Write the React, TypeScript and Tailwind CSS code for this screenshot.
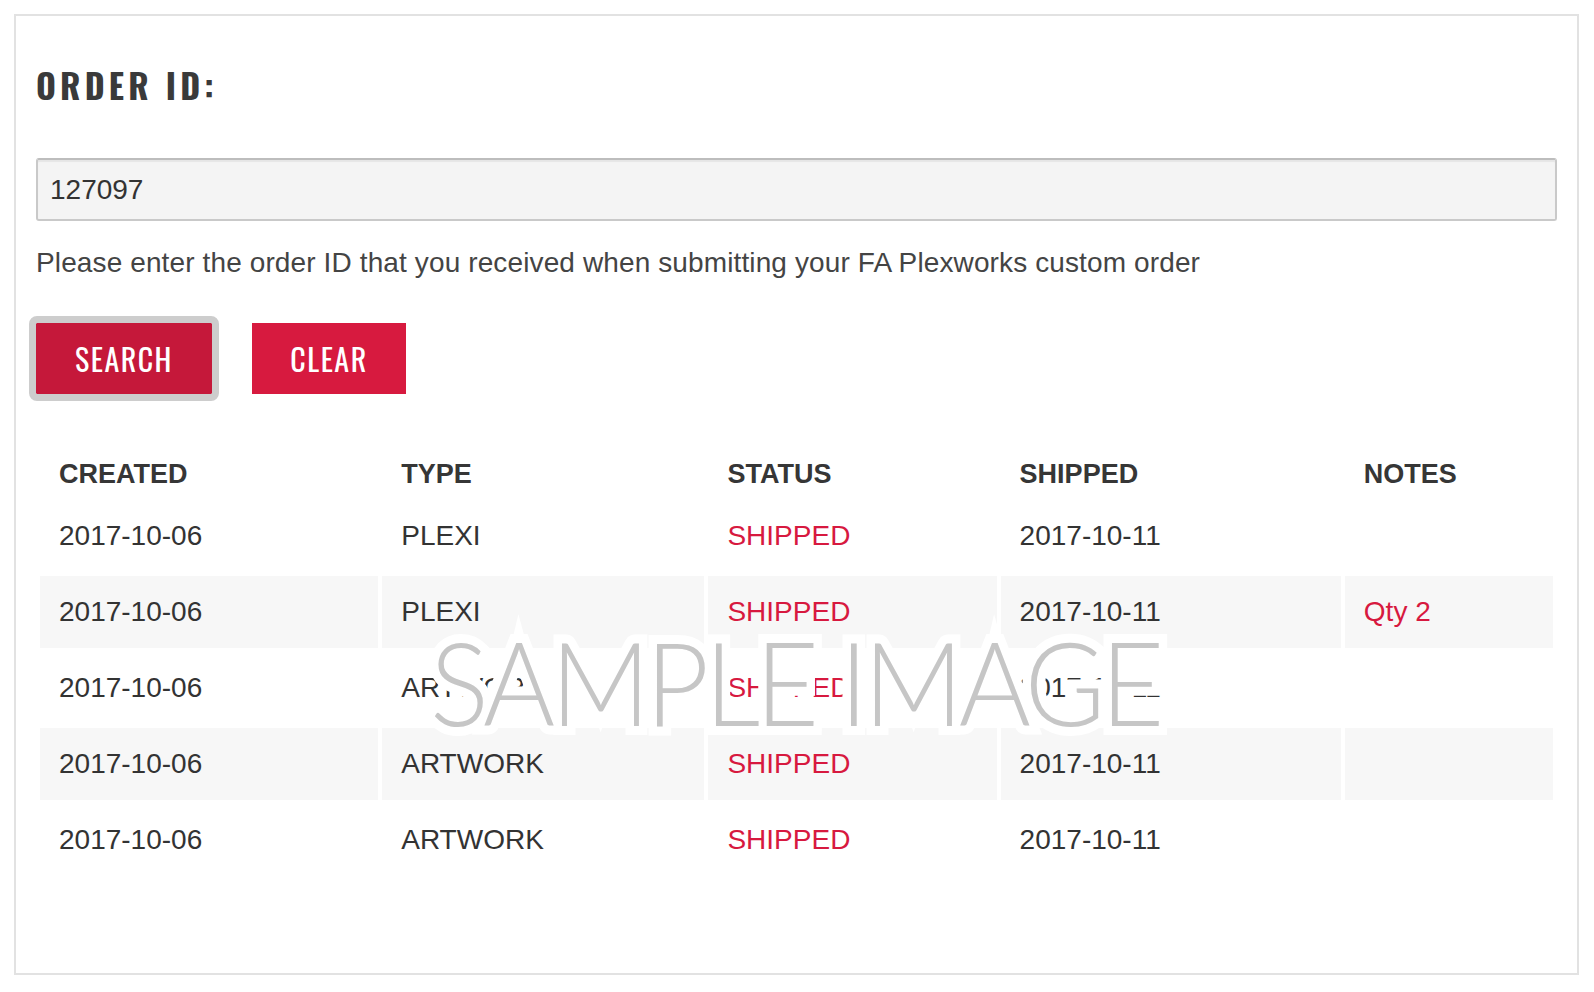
import React from 'react';

const rows = [
  { created: '2017-10-06', type: 'PLEXI', status: 'SHIPPED', shipped: '2017-10-11', notes: '' },
  { created: '2017-10-06', type: 'PLEXI', status: 'SHIPPED', shipped: '2017-10-11', notes: 'Qty 2' },
  { created: '2017-10-06', type: 'ARTWORK', status: 'SHIPPED', shipped: '2017-10-11', notes: '' },
  { created: '2017-10-06', type: 'ARTWORK', status: 'SHIPPED', shipped: '2017-10-11', notes: '' },
  { created: '2017-10-06', type: 'ARTWORK', status: 'SHIPPED', shipped: '2017-10-11', notes: '' },
];

const condensed = "font-['Oswald','Liberation_Sans_Narrow','DejaVu_Sans_Condensed',sans-serif] [font-stretch:condensed]";

const App = () => {
  return (
    <div className="p-[14px] bg-white font-['Liberation_Sans','Helvetica',sans-serif] text-[#333]">
      <div className="relative w-[1565px] h-[961px] border-2 border-[#e2e2e2] px-[20px] pt-[52px]">
        <h1 className={`${condensed} text-[34px] leading-none font-bold tracking-[4.2px] text-[#3a3a3a]`}>
          ORDER ID:
        </h1>

        <input
          type="text"
          defaultValue="127097"
          className="mt-[56px] block w-full h-[63px] px-[12px] bg-[#f4f4f4] border-2 border-[#c9c9c9] border-t-[#bdbdbd] rounded-[3px] text-[28px] text-[#333] shadow-[inset_0_2px_1px_rgba(0,0,0,0.06)] outline-none"
        />

        <p className="mt-[28px] text-[28px] leading-none tracking-[0.12px] text-[#444]">
          Please enter the order ID that you received when submitting your FA Plexworks custom order
        </p>

        <div className="mt-[46px] flex gap-10">
          <button
            className={`${condensed} w-[176px] h-[71px] bg-[#c5183a] text-white text-[30px] tracking-[1.5px] rounded-[1px] outline-[7px] outline-solid outline-[#cdcdcd]`}
          >
            SEARCH
          </button>
          <button
            className={`${condensed} w-[154px] h-[71px] bg-[#d71a3f] text-white text-[30px] tracking-[1.5px]`}
          >
            CLEAR
          </button>
        </div>

        <table className="mt-[54px] w-full table-fixed border-separate border-spacing-[4px]">
          <colgroup>
            <col className="w-[338px]" />
            <col className="w-[322px]" />
            <col className="w-[288px]" />
            <col className="w-[340px]" />
            <col className="w-[208px]" />
          </colgroup>
          <thead>
            <tr className="h-[44px]">
              {['CREATED', 'TYPE', 'STATUS', 'SHIPPED', 'NOTES'].map((h) => (
                <th key={h} className="px-[19px] text-left text-[27px] font-bold text-[#363636]">
                  {h}
                </th>
              ))}
            </tr>
          </thead>
          <tbody>
            {rows.map((r, i) => {
              const cell = `h-[72px] px-[19px] text-[28px] ${i % 2 === 1 ? 'bg-[#f7f7f7]' : ''}`;
              return (
                <tr key={i}>
                  <td className={cell}>{r.created}</td>
                  <td className={cell}>{r.type}</td>
                  <td className={`${cell} text-[#d7193f]`}>{r.status}</td>
                  <td className={cell}>{r.shipped}</td>
                  <td className={`${cell} text-[#d7193f]`}>{r.notes}</td>
                </tr>
              );
            })}
          </tbody>
        </table>

        {/* watermark overlay */}
        <div
          aria-hidden="true"
          className="absolute left-[414px] top-[607px] origin-left scale-x-[0.94] font-['Lato',sans-serif] font-light text-[117px] leading-none tracking-[-5px] text-[#c6c6c6] [-webkit-text-stroke:18px_white] [paint-order:stroke_fill] pointer-events-none select-none whitespace-nowrap"
        >
          SAMPLE IMAGE
        </div>
      </div>
    </div>
  );
};

export default App;
